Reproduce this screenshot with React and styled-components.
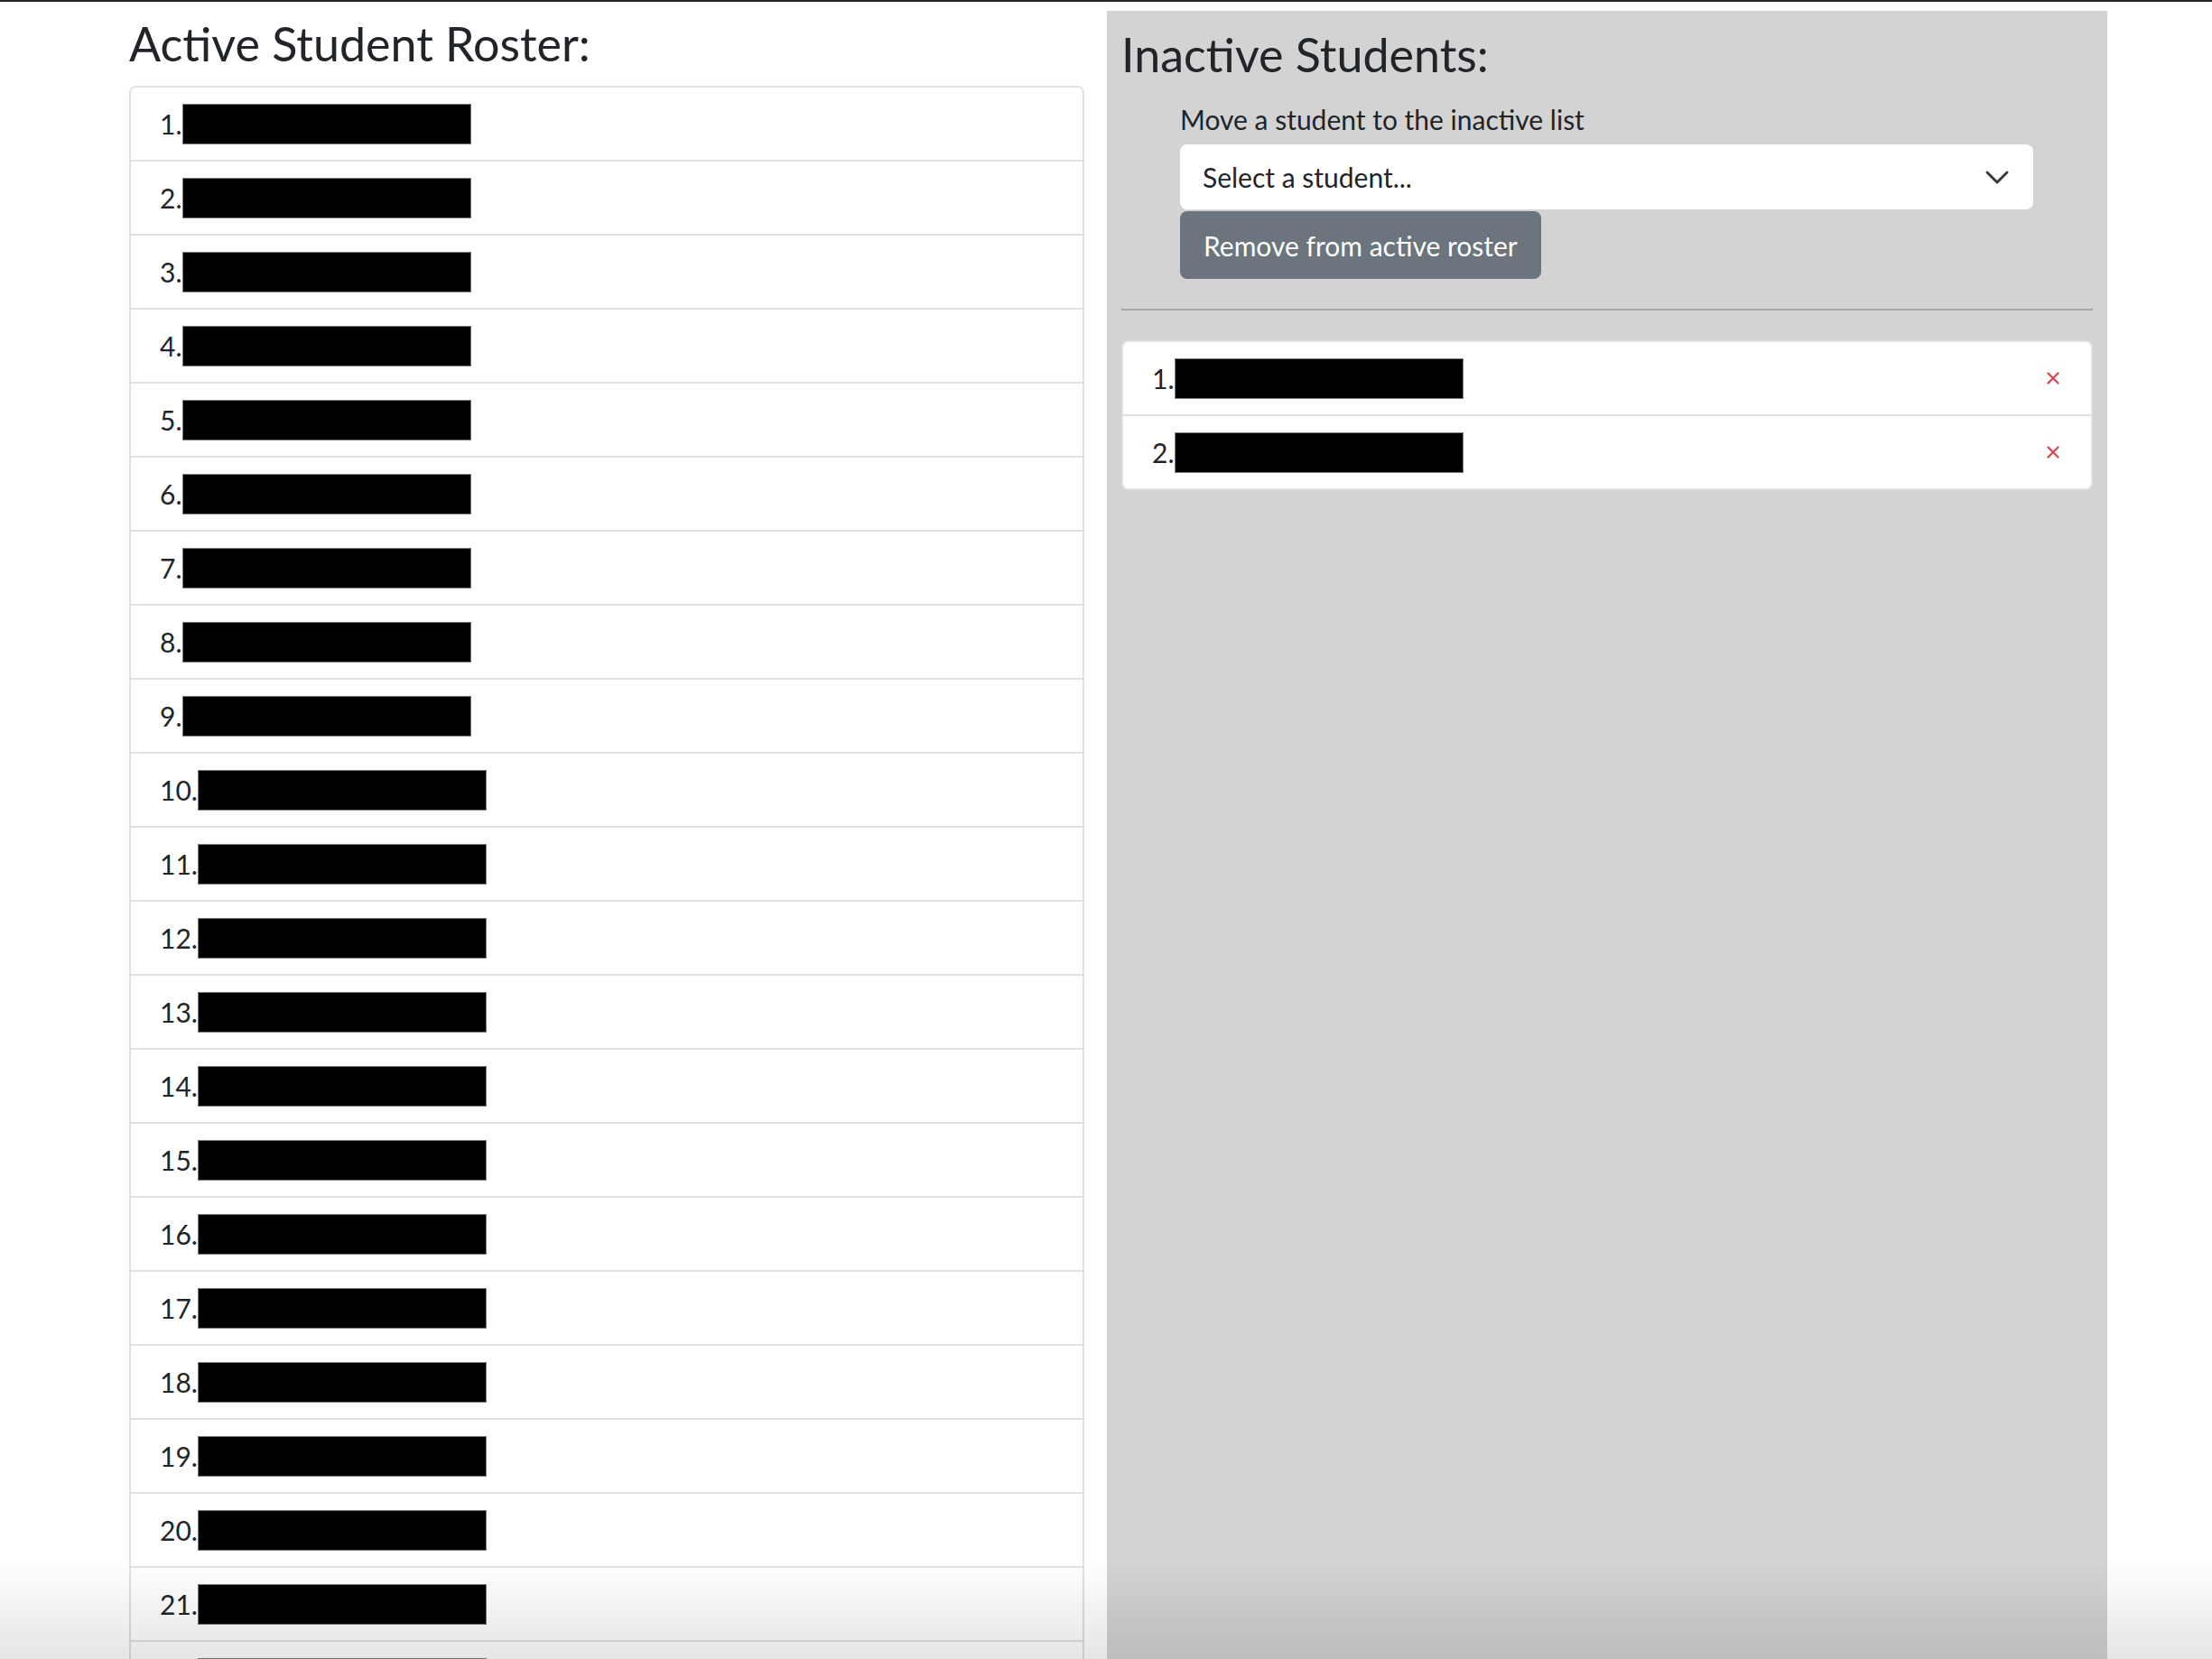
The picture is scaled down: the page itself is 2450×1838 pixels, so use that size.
import React from 'react';
import styled, { createGlobalStyle } from 'styled-components';

const GlobalStyle = createGlobalStyle`
  html, body {
    margin: 0;
    padding: 0;
    background: #fff;
    overflow: hidden;
  }
  body {
    font-family: Lato, "Noto Sans", sans-serif;
    font-size: 30px;
    line-height: 1.5;
    color: #212529;
  }
  * {
    box-sizing: border-box;
  }
`;

const TopBar = styled.div`
  height: 2px;
  background: #222;
`;

const Page = styled.div`
  display: grid;
  grid-template-columns: 1058px 1108px;
  column-gap: 25px;
  padding-left: 143px;
  margin-top: 10px;
  align-items: stretch;
`;

const Column = styled.section`
  display: flex;
  flex-direction: column;
`;

const Panel = styled.section`
  display: flex;
  flex-direction: column;
  background: #d3d3d3;
  padding: 17px 16px 40px 16px;
`;

const Heading = styled.h3`
  margin: ${(p) => (p.$inPanel ? '0 0 19px 0' : '5px 0 16px 0')};
  font-size: 52px;
  font-weight: 400;
  line-height: 1.2;
`;

const Form = styled.div`
  display: flex;
  flex-direction: column;
  align-items: flex-start;
  margin: 0 66px 0 65px;
`;

const Label = styled.label`
  margin-bottom: 5px;
  line-height: 45px;
`;

const SelectBox = styled.div`
  display: flex;
  align-items: center;
  justify-content: space-between;
  align-self: stretch;
  height: 72px;
  padding: 0 24px 0 25px;
  background: #fff;
  border-radius: 8px;
  color: #212529;
`;

const Chevron = styled.svg`
  width: 32px;
  height: 32px;
  flex-shrink: 0;
`;

const Button = styled.button`
  margin-top: 2px;
  height: 75px;
  padding: 0 26px;
  border: none;
  border-radius: 8px;
  background: #6c757d;
  color: #fff;
  font-family: inherit;
  font-size: 30px;
  cursor: pointer;
`;

const Divider = styled.hr`
  margin: 33px 0;
  border: 0;
  border-top: 2px solid #a9a9a9;
`;

const List = styled.ol`
  margin: 0;
  padding: 0;
  list-style: none;
  background: #fff;
  border: 2px solid #dee2e6;
  border-radius: 8px;
  overflow: hidden;
`;

const Row = styled.li`
  display: flex;
  align-items: center;
  height: ${(p) => (p.$first ? '80px' : '82px')};
  padding: 0 32px;
  border-top: ${(p) => (p.$first ? 'none' : '2px solid #dee2e6')};
`;

const Redacted = styled.span`
  display: inline-block;
  width: 320px;
  height: 45px;
  background: #000;
  border: 1px solid #7a7a7a;
`;

const RemoveX = styled.svg`
  margin-left: auto;
  margin-right: 3px;
  width: 14px;
  height: 14px;
  cursor: pointer;
`;

const BottomShade = styled.div`
  position: fixed;
  left: 0;
  right: 0;
  bottom: 0;
  height: 110px;
  background: linear-gradient(to bottom, rgba(0, 0, 0, 0), rgba(0, 0, 0, 0.1));
  pointer-events: none;
`;

const activeCount = 24;
const inactiveCount = 2;

const App = () => {
  const active = Array.from({ length: activeCount }, (_, i) => i + 1);
  const inactive = Array.from({ length: inactiveCount }, (_, i) => i + 1);

  return (
    <>
      <GlobalStyle />
      <TopBar />
      <Page>
        <Column>
          <Heading>Active Student Roster:</Heading>
          <List>
            {active.map((n) => (
              <Row key={n} $first={n === 1}>
                <span>{n}.</span>
                <Redacted />
              </Row>
            ))}
          </List>
        </Column>

        <Panel>
          <Heading $inPanel>Inactive Students:</Heading>
          <Form>
            <Label>Move a student to the inactive list</Label>
            <SelectBox>
              <span>Select a student...</span>
              <Chevron viewBox="0 0 16 16">
                <path d="m2.5 5.5 5.5 5.5 5.5-5.5" fill="none" stroke="#343a40" strokeWidth="1.5" strokeLinecap="round" strokeLinejoin="round" />
              </Chevron>
            </SelectBox>
            <Button>Remove from active roster</Button>
          </Form>
          <Divider />
          <List>
            {inactive.map((n) => (
              <Row key={n} $first={n === 1}>
                <span>{n}.</span>
                <Redacted />
                <RemoveX viewBox="0 0 14 14">
                  <path d="M1.5 1.5 12.5 12.5 M12.5 1.5 1.5 12.5" stroke="#d9434f" strokeWidth="2.2" strokeLinecap="round" />
                </RemoveX>
              </Row>
            ))}
          </List>
        </Panel>
      </Page>
      <BottomShade />
    </>
  );
};

export default App;
